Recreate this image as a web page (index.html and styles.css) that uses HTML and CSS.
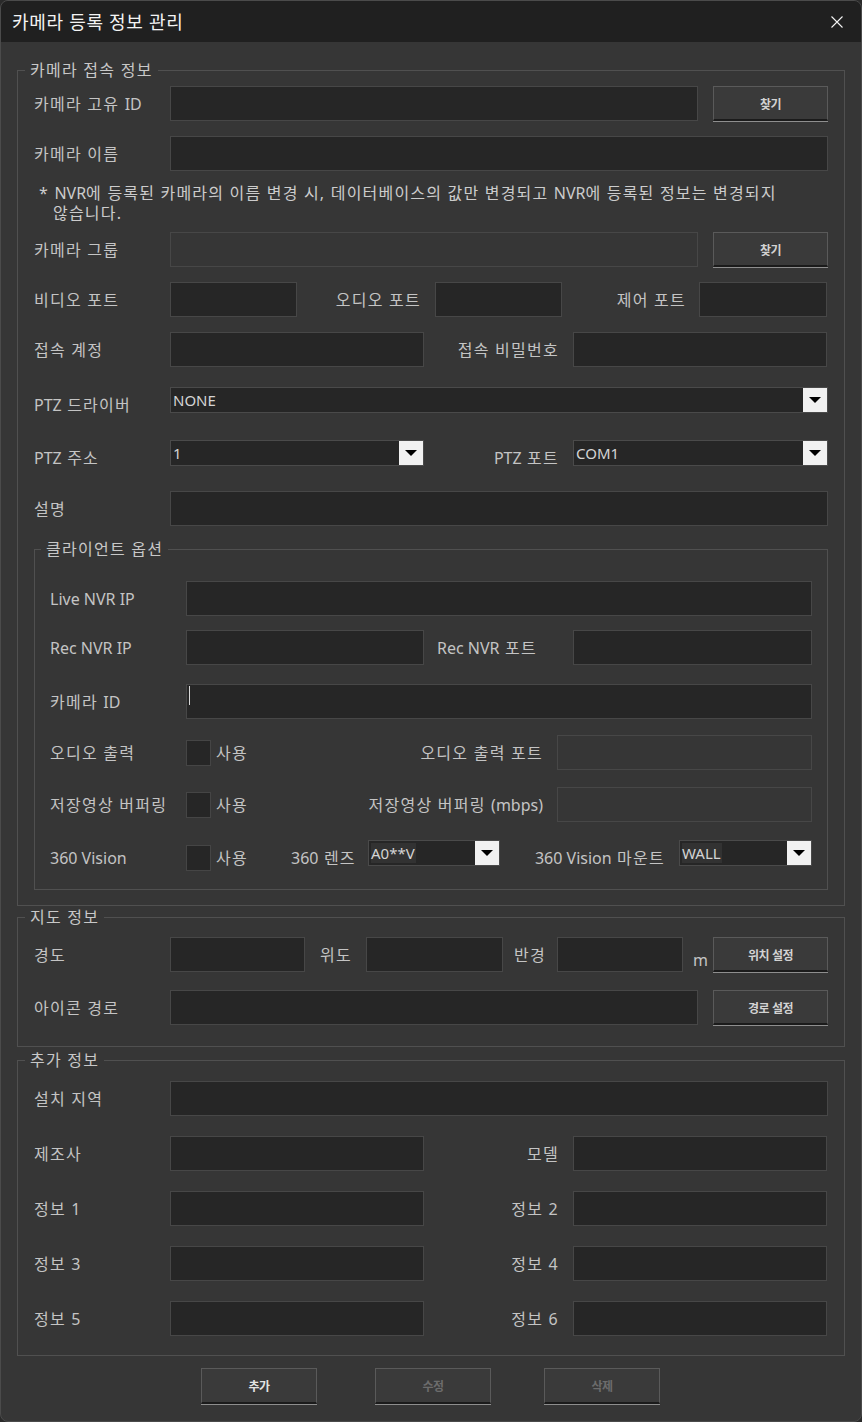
FILE: index.html
```html
<!DOCTYPE html>
<html lang="ko">
<head>
<meta charset="utf-8">
<title>카메라 등록 정보 관리</title>
<link rel="stylesheet" href="styles.css">
</head>
<body>
<div class="window">
  <header class="titlebar">
    <span class="title">카메라 등록 정보 관리</span>
    <span class="close"><svg width="12" height="12" viewBox="0 0 12 12"><path d="M0.5 0.5L11.5 11.5M11.5 0.5L0.5 11.5" stroke="#f2f2f2" stroke-width="1.1" fill="none"/></svg></span>
  </header>
  <main class="body">
    <fieldset class="group g-conn">
      <legend>카메라 접속 정보</legend>
      <div class="row mt6">
        <span class="lbl">카메라 고유 <span class="lat">ID</span></span>
        <span class="field w528"></span>
        <button class="btn ml15">찾기</button>
      </div>
      <div class="row mt15">
        <span class="lbl">카메라 이름</span>
        <span class="field grow"></span>
      </div>
      <p class="note">* <span class="lat">NVR</span>에 등록된 카메라의 이름 변경 시, 데이터베이스의 값만 변경되고 <span class="lat">NVR</span>에 등록된 정보는 변경되지<br>않습니다.</p>
      <div class="row mt9">
        <span class="lbl">카메라 그룹</span>
        <span class="field dis w528"></span>
        <button class="btn ml15">찾기</button>
      </div>
      <div class="row mt15">
        <span class="lbl">비디오 포트</span>
        <span class="field w127"></span>
        <span class="mlbl w138">오디오 포트</span>
        <span class="field w127"></span>
        <span class="mlbl w137 pr13">제어 포트</span>
        <span class="field w128"></span>
      </div>
      <div class="row mt15">
        <span class="lbl">접속 계정</span>
        <span class="field w254"></span>
        <span class="mlbl w149">접속 비밀번호</span>
        <span class="field w254"></span>
      </div>
      <div class="row tall mt20">
        <span class="lbl"><span class="lat">PTZ</span> 드라이버</span>
        <span class="sel grow"><span class="val">NONE</span><span class="arrow"></span></span>
      </div>
      <div class="row tall mt18">
        <span class="lbl"><span class="lat">PTZ</span> 주소</span>
        <span class="sel w254"><span class="val">1</span><span class="arrow"></span></span>
        <span class="mlbl w149"><span class="lat">PTZ</span> 포트</span>
        <span class="sel w255"><span class="val">COM1</span><span class="arrow"></span></span>
      </div>
      <div class="row mt16">
        <span class="lbl">설명</span>
        <span class="field grow"></span>
      </div>

      <fieldset class="group inner">
        <legend>클라이언트 옵션</legend>
        <div class="row mt22">
          <span class="lbl lat">Live NVR IP</span>
          <span class="field grow"></span>
        </div>
        <div class="row mt14">
          <span class="lbl lat">Rec NVR IP</span>
          <span class="field w238"></span>
          <span class="mlbl left w149"><span class="lat">Rec NVR</span> 포트</span>
          <span class="field w239"></span>
        </div>
        <div class="row mt19">
          <span class="lbl">카메라 <span class="lat">ID</span></span>
          <span class="field grow focus"><span class="caret"></span></span>
        </div>
        <div class="row mt16">
          <span class="lbl">오디오 출력</span>
          <span class="opt"><span class="cb"></span><span class="cbtext">사용</span></span>
          <span class="mlbl grow">오디오 출력 포트</span>
          <span class="field dis w255"></span>
        </div>
        <div class="row mt17">
          <span class="lbl">저장영상 버퍼링</span>
          <span class="opt"><span class="cb"></span><span class="cbtext">사용</span></span>
          <span class="mlbl grow">저장영상 버퍼링 <span class="lat">(mbps)</span></span>
          <span class="field dis w255"></span>
        </div>
        <div class="row tall mt18">
          <span class="lbl lat">360 Vision</span>
          <span class="opt"><span class="cb"></span><span class="cbtext">사용</span></span>
          <span class="mlbl left w77 pl0"><span class="lat">360</span> 렌즈</span>
          <span class="sel w132"><span class="val"><span class="hl">A0**V</span></span><span class="arrow"></span></span>
          <span class="mlbl w179"><span class="lat">360 Vision</span> 마운트</span>
          <span class="sel w133"><span class="val"><span class="hl">WALL</span></span><span class="arrow"></span></span>
        </div>
      </fieldset>
    </fieldset>

    <fieldset class="group g-map">
      <legend>지도 정보</legend>
      <div class="row mt10">
        <span class="lbl">경도</span>
        <span class="field w135"></span>
        <span class="mlbl left w61 pl15">위도</span>
        <span class="field w137"></span>
        <span class="mlbl left w54 pl11">반경</span>
        <span class="field w126"></span>
        <span class="unit">m</span>
        <button class="btn">위치 설정</button>
      </div>
      <div class="row mt18">
        <span class="lbl">아이콘 경로</span>
        <span class="field w528"></span>
        <button class="btn ml15">경로 설정</button>
      </div>
    </fieldset>

    <fieldset class="group g-extra">
      <legend>추가 정보</legend>
      <div class="row mt11">
        <span class="lbl">설치 지역</span>
        <span class="field grow"></span>
      </div>
      <div class="row mt20">
        <span class="lbl">제조사</span>
        <span class="field w254"></span>
        <span class="mlbl w149">모델</span>
        <span class="field w254"></span>
      </div>
      <div class="row mt20">
        <span class="lbl">정보 1</span>
        <span class="field w254"></span>
        <span class="mlbl w149">정보 2</span>
        <span class="field w254"></span>
      </div>
      <div class="row mt20">
        <span class="lbl">정보 3</span>
        <span class="field w254"></span>
        <span class="mlbl w149">정보 4</span>
        <span class="field w254"></span>
      </div>
      <div class="row mt20">
        <span class="lbl">정보 5</span>
        <span class="field w254"></span>
        <span class="mlbl w149">정보 6</span>
        <span class="field w254"></span>
      </div>
    </fieldset>

    <div class="actions">
      <button class="btn big">추가</button>
      <button class="btn big off gap1">수정</button>
      <button class="btn big off gap2">삭제</button>
    </div>
  </main>
</div>
</body>
</html>
```

FILE: styles.css
```css
* { box-sizing: border-box; }
html, body { margin: 0; padding: 0; }
body {
  width: 862px;
  height: 1422px;
  background: #2a2a2a;
  font-family: "Noto Sans", "Noto Sans CJK KR", sans-serif;
  font-size: 16px;
  color: #c4c4c4;
  overflow: hidden;
}
.window {
  width: 862px;
  height: 1422px;
  background: #363636;
  border: 1px solid #4b4b4b;
  border-radius: 8px;
  overflow: hidden;
}
.titlebar {
  height: 41px;
  background: #202020;
  display: flex;
  align-items: center;
  padding: 0 18px 0 11px;
}
.title { font-size: 18px; line-height: 24px; color: #f4f4f4; letter-spacing: 0.7px; }
.close { margin-left: auto; display: flex; }

.body { padding: 18px 0 0 16px; }

.group {
  width: 828px;
  margin: 0;
  padding: 0 16px;
  border: 1px solid #505050;
  min-width: 0;
}
.group legend {
  margin-left: -9px;
  padding: 0 5px;
  line-height: 20px;
  color: #c8c8c8;
  letter-spacing: 1.25px;
}
.g-conn { padding-bottom: 15px; }
.inner { width: 794px; margin: 13px 0 0; padding: 0 15px 14px; }
.g-map { margin-top: 1px; padding-bottom: 21px; }
.g-extra { margin-top: 3px; padding-bottom: 19px; }

.row { display: flex; align-items: center; height: 35px; }
.row.tall { align-items: flex-start; }
.row.tall > .lbl, .row.tall > .mlbl, .row.tall > .opt { align-self: center; }

.lbl { width: 136px; flex: none; line-height: 20px; white-space: nowrap; letter-spacing: 1.25px; }
.mlbl { flex: none; line-height: 20px; white-space: nowrap; text-align: right; padding-right: 14px; letter-spacing: 1.25px; }
.mlbl.left { text-align: left; padding-right: 0; padding-left: 13px; }
.mlbl.pl0 { padding-left: 0; }
.mlbl.pl15 { padding-left: 15px; }
.mlbl.pl11 { padding-left: 11px; }
.mlbl.pr13 { padding-right: 13px; }
.lat { letter-spacing: 0; }
.grow { flex: 1 1 auto; }

.field {
  flex: none;
  height: 35px;
  background: #262626;
  border: 1px solid #474747;
}
.field.grow { flex: 1 1 auto; }
.field.dis { background: #363636; }
.field.focus { display: flex; padding-left: 2px; }
.caret { width: 1px; height: 19px; margin-top: 1px; background: #d8d8d8; }

.sel {
  flex: none;
  display: flex;
  height: 26px;
  background: #262626;
  border: 1px solid #4a4a4a;
}
.sel.grow { flex: 1 1 auto; }
.sel .val {
  flex: 1;
  padding-left: 2px;
  font-size: 15px;
  line-height: 24px;
  color: #d4d4d4;
  white-space: nowrap;
  overflow: hidden;
}
.sel .hl { background: #323232; padding-right: 1px; }
.sel .arrow {
  width: 24px;
  flex: none;
  background: #f1f1f1;
  display: flex;
  align-items: center;
  justify-content: center;
}
.sel .arrow::after {
  content: "";
  border-left: 6px solid transparent;
  border-right: 6px solid transparent;
  border-top: 6px solid #000;
}

.opt { width: 105px; flex: none; display: flex; align-items: center; }
.cb { width: 25px; height: 26px; background: #262626; border: 1px solid #454545; }
.cbtext { margin-left: 5px; line-height: 20px; letter-spacing: 1.25px; }

.note {
  margin: 12px 0 0;
  padding-left: 19px;
  text-indent: -14px;
  line-height: 20px;
  color: #cccccc;
  letter-spacing: 1.2px;
}

.unit {
  width: 30px;
  flex: none;
  align-self: flex-end;
  padding-left: 10px;
  padding-bottom: 2px;
  line-height: 20px;
}

.btn {
  flex: none;
  width: 115px;
  height: 35px;
  padding: 0;
  background: #3a3a3a;
  border: 1px solid #5a5a5a;
  border-bottom: 2px solid #1b1b1b;
  box-shadow: 0 1px 0 #8e8e8e;
  font-family: "Noto Sans CJK KR", sans-serif;
  font-size: 12px;
  font-weight: 700;
  letter-spacing: -0.5px;
  color: #d2d2d2;
}
.btn.big { width: 116px; height: 36px; color: #e2e2e2; }
.btn.off { color: #6c6c6c; }

.actions { display: flex; padding-left: 184px; margin-top: 12px; }
.gap1 { margin-left: 58px; }
.gap2 { margin-left: 53px; }

.ml15 { margin-left: 15px; }
.mt6 { margin-top: 6px; }
.mt9 { margin-top: 9px; }
.mt10 { margin-top: 10px; }
.mt11 { margin-top: 11px; }
.mt14 { margin-top: 14px; }
.mt15 { margin-top: 15px; }
.mt16 { margin-top: 16px; }
.mt17 { margin-top: 17px; }
.mt18 { margin-top: 18px; }
.mt19 { margin-top: 19px; }
.mt20 { margin-top: 20px; }
.mt22 { margin-top: 22px; }

.w54 { width: 54px; }
.w61 { width: 61px; }
.w77 { width: 77px; }
.w126 { width: 126px; }
.w127 { width: 127px; }
.w128 { width: 128px; }
.w132 { width: 132px; }
.w133 { width: 133px; }
.w135 { width: 135px; }
.w137 { width: 137px; }
.w138 { width: 138px; }
.w149 { width: 149px; }
.w179 { width: 179px; }
.w238 { width: 238px; }
.w239 { width: 239px; }
.w254 { width: 254px; }
.w255 { width: 255px; }
.w528 { width: 528px; }
```
